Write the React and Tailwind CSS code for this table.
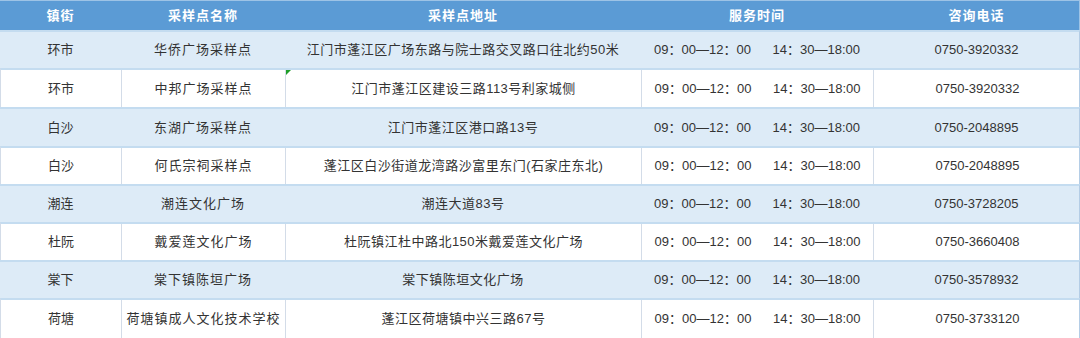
import React from "react";

const rows = [
  ["环市", "华侨广场采样点", "江门市蓬江区广场东路与院士路交叉路口往北约50米", "0750-3920332", "h-[38px]"],
  ["环市", "中邦广场采样点", "江门市蓬江区建设三路113号利家城侧", "0750-3920332", "h-[39px]"],
  ["白沙", "东湖广场采样点", "江门市蓬江区港口路13号", "0750-2048895", "h-[39px]"],
  ["白沙", "何氏宗祠采样点", "蓬江区白沙街道龙湾路沙富里东门(石家庄东北)", "0750-2048895", "h-[38px]"],
  ["潮连", "潮连文化广场", "潮连大道83号", "0750-3728205", "h-[38px]"],
  ["杜阮", "戴爱莲文化广场", "杜阮镇江杜中路北150米戴爱莲文化广场", "0750-3660408", "h-[38px]"],
  ["棠下", "棠下镇陈垣广场", "棠下镇陈垣文化广场", "0750-3578932", "h-[38px]"],
  ["荷塘", "荷塘镇成人文化技术学校", "蓬江区荷塘镇中兴三路67号", "0750-3733120", "h-[40px]"],
];

const font = { fontFamily: '"Liberation Sans", "Noto Sans CJK SC", sans-serif' };

export default function App() {
  return (
    <div className="w-[1080px] h-[338px] overflow-hidden bg-white text-[13px] text-[#333333]" style={font}>
      <div className="grid grid-cols-[121px_164px_356px_232px_207px] h-[30px] bg-[#5b9bd5] border-t border-[#9dc3e6] border-r border-r-[#9dc3e6] text-white font-bold tracking-[1px]">
        <div className="flex items-center justify-center">镇街</div>
        <div className="flex items-center justify-center">采样点名称</div>
        <div className="flex items-center justify-center">采样点地址</div>
        <div className="flex items-center justify-center">服务时间</div>
        <div className="flex items-center justify-center">咨询电话</div>
      </div>
      {rows.map((r, i) => {
        const blue = i % 2 === 0;
        const line = blue ? "" : "border-r border-r-[#d3dce8]";
        return (
          <div
            key={i}
            className={`grid grid-cols-[121px_164px_356px_232px_207px] ${r[4]} border-t-2 border-[#c4dcf0] border-r border-r-[#b4cde6] ${blue ? "bg-[#ddebf7]" : "bg-white border-l border-l-[#d3dce8]"}`}
          >
            <div className={`flex items-center justify-center ${line}`}>{r[0]}</div>
            <div className={`flex items-center justify-center ${line} tracking-[1px]`}>{r[1]}</div>
            <div className={`relative flex items-center justify-center ${line} tracking-[0.5px]`}>
              {i === 1 && (
                <span className="absolute left-0 top-0 w-0 h-0 border-t-[5px] border-t-[#1e9e28] border-r-[5px] border-r-transparent" />
              )}
              {r[2]}
            </div>
            <div className={`flex items-center justify-center whitespace-pre ${line}`}>
              {"09：00—12：00      14：30—18:00"}
            </div>
            <div className="flex items-center justify-center">{r[3]}</div>
          </div>
        );
      })}
    </div>
  );
}
